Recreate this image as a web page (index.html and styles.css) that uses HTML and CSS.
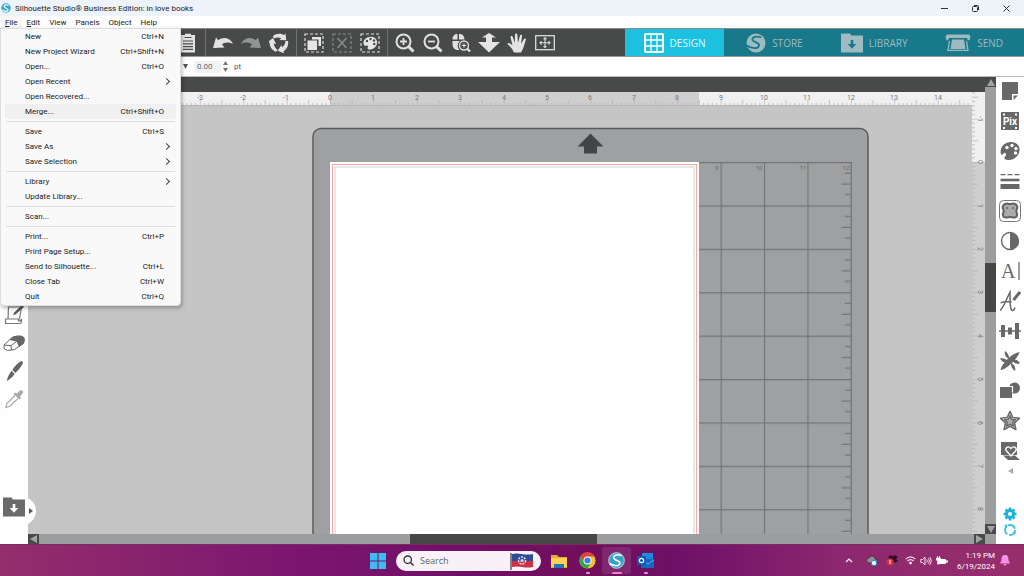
FILE: index.html
```html
<!DOCTYPE html>
<html lang="en">
<head>
<meta charset="utf-8">
<title>Silhouette Studio</title>
<link rel="stylesheet" href="styles.css">
</head>
<body>
<div class="app">
  <header class="titlebar">
    <svg class="logo" width="10" height="10" viewBox="0 0 20 20"><circle cx="10" cy="10" r="9.5" fill="#37a9cc"/><path d="M15 5C11 2 5 4 7 8s8 2 7 6-7 3-11 0" fill="none" stroke="#fff" stroke-width="2.4"/></svg>
    <span class="title">Silhouette Studio® Business Edition: in love books</span>
    <div class="window-buttons">
      <button aria-label="Minimize"><svg width="9" height="9"><path d="M1 4.500H8" stroke="#333"/></svg></button>
      <button aria-label="Restore"><svg width="9" height="9" fill="none" stroke="#333"><rect x="1.500" y="2.500" width="5" height="5" rx="1"/><path d="M3 1.500h3.500a1 1 0 0 1 1 1V6"/></svg></button>
      <button aria-label="Close"><svg width="9" height="9"><path d="M1.500 1.500l6 6M7.500 1.500l-6 6" stroke="#333"/></svg></button>
    </div>
  </header>

  <nav class="menubar">
    <button class="open"><u>F</u>ile</button>
    <button><u>E</u>dit</button>
    <button>View</button>
    <button>Panels</button>
    <button>Object</button>
    <button>Help</button>
    <div class="menu" role="menu">
      <button role="menuitem">New<span>Ctrl+N</span></button>
      <button role="menuitem">New Project Wizard<span>Ctrl+Shift+N</span></button>
      <button role="menuitem">Open...<span>Ctrl+O</span></button>
      <button role="menuitem" class="sub">Open Recent</button>
      <button role="menuitem">Open Recovered...</button>
      <button role="menuitem" class="hover">Merge...<span>Ctrl+Shift+O</span></button>
      <hr>
      <button role="menuitem">Save<span>Ctrl+S</span></button>
      <button role="menuitem" class="sub">Save As</button>
      <button role="menuitem" class="sub">Save Selection</button>
      <hr>
      <button role="menuitem" class="sub">Library</button>
      <button role="menuitem">Update Library...</button>
      <hr>
      <button role="menuitem">Scan...</button>
      <hr>
      <button role="menuitem">Print...<span>Ctrl+P</span></button>
      <button role="menuitem">Print Page Setup...</button>
      <button role="menuitem">Send to Silhouette...<span>Ctrl+L</span></button>
      <button role="menuitem">Close Tab<span>Ctrl+W</span></button>
      <button role="menuitem">Quit<span>Ctrl+Q</span></button>
    </div>
  </nav>

  <div class="toolbar">
    <div class="tools">
      <button aria-label="Paste"><svg width="20" height="20" viewBox="0 0 20 20"><path d="M3 2h4V.8h6V2h4v17.500H3z" fill="#e2e2e2"/><path d="M6.500 4.500h7M5 8h10M5 10.800h10M5 13.600h10M5 16.400h10" stroke="#484a49" stroke-width="1.200"/></svg></button>
      <i class="divider"></i>
      <button aria-label="Undo"><svg width="20" height="20" viewBox="0 0 20 20"><path d="M0 15L3 4.500l2.300 2.700C10 3.500 17 4.500 20 11 15 8.800 11.500 9.300 9 11.500L11.500 14.500z" fill="#e2e2e2"/></svg></button>
      <button aria-label="Redo"><svg width="20" height="20" viewBox="0 0 20 20"><path d="M20 15L17 4.500l-2.300 2.700C10 3.500 3 4.500 0 11 5 8.800 8.500 9.300 11 11.500L8.500 14.500z" fill="#929393"/></svg></button>
      <button aria-label="Refresh"><svg width="20" height="20" viewBox="0 0 20 20"><g fill="#e2e2e2"><path id="arc" d="M3.800 3.200C7.500 0 12 .2 14.800 2L16.500.5l.8 6.800-6.800-.3 1.800-1.800C9.500 4 7 4.200 5 5.500z"/><use href="#arc" transform="rotate(120 10 10)"/><use href="#arc" transform="rotate(240 10 10)"/></g></svg></button>
      <i class="divider"></i>
      <button aria-label="Select all"><svg width="20" height="20" viewBox="0 0 20 20"><rect x="1" y="1" width="18" height="18" fill="none" stroke="#ddd" stroke-width="1.200" stroke-dasharray="3 2"/><path d="M8 4h9v9h-2.500V6.500H8z" fill="#e6e6e6"/><rect x="3.500" y="7.500" width="9.500" height="9.500" fill="#e6e6e6"/></svg></button>
      <button aria-label="Deselect"><svg width="20" height="20" viewBox="0 0 20 20"><rect x="1" y="1" width="18" height="18" fill="none" stroke="#8a8b8b" stroke-width="1.200" stroke-dasharray="3 2"/><path d="M5.500 5l9 10M14.500 5l-9 10" stroke="#8a8b8b" stroke-width="1.500"/></svg></button>
      <button aria-label="Select by color"><svg width="20" height="20" viewBox="0 0 20 20"><rect x="1" y="1" width="18" height="18" fill="none" stroke="#ddd" stroke-width="1.200" stroke-dasharray="3 2"/><path d="M3.500 11C3 6.500 7 3.500 11 3.700c4 .2 6.500 3 6 6.500-.5 4-4 6.500-8 6.300-2-.1-1.500-2.500-.5-3.500-2-1-3.500 1-5-2z" fill="#e6e6e6"/><g fill="#484a49"><circle cx="7" cy="8" r="1.200"/><circle cx="10.500" cy="6" r="1.200"/><circle cx="14" cy="7.500" r="1.200"/><circle cx="14.300" cy="11" r="1.200"/></g></svg></button>
      <i class="divider"></i>
      <button aria-label="Zoom in"><svg width="20" height="20" viewBox="0 0 20 20" fill="none" stroke="#e0e0e0"><circle cx="8.500" cy="8.500" r="7" stroke-width="2"/><path d="M13.500 13.500l5 5" stroke-width="3"/><path d="M5 8.500h7M8.500 5v7" stroke-width="1.800"/></svg></button>
      <button aria-label="Zoom out"><svg width="20" height="20" viewBox="0 0 20 20" fill="none" stroke="#e0e0e0"><circle cx="8.500" cy="8.500" r="7" stroke-width="2"/><path d="M13.500 13.500l5 5" stroke-width="3"/><path d="M5 8.500h7" stroke-width="1.800"/></svg></button>
      <button aria-label="Zoom selection"><svg width="20" height="20" viewBox="0 0 20 20"><path d="M6.500 1v5.500H1.500C1.500 3 3.500 1 6.500 1zM8 1c3.500 0 5.500 2 5.500 5.500H8zM1.500 8H9c-3 2.500-3 6-.5 9-4.500.5-7-2-7-6z" fill="#e0e0e0"/><g fill="none" stroke="#e0e0e0"><circle cx="13" cy="12.500" r="4.500" stroke-width="1.400"/><path d="M16 15.500l3 3" stroke-width="2.400"/><path d="M10.800 12.500h4.400M13 10.300v4.400"/></g></svg></button>
      <button aria-label="Drag zoom"><svg width="22" height="20" viewBox="0 0 22 20"><path d="M11 0l7 4.500h-4V9h8L11 19.500 0 9h8V4.500H4z" fill="#e4e4e4"/></svg></button>
      <button aria-label="Pan"><svg width="20" height="20" viewBox="0 0 20 20"><path d="M7 19.500c-1-3-4-6-6.500-8.500 0-1.500 2-1.300 5 1.500L3.500 4c0-1.500 2-1.500 2.300 0l2 6L8 1.500C8.200 0 10.200 0 10.300 1.500L11 10l2-7.500c.5-1.300 2.300-1 2 .5L14 11l3-5c.8-1.200 2.400-.3 1.800 1-1 3-2.300 9-4.800 12.500z" fill="#e4e4e4"/></svg></button>
      <button aria-label="Fit to page"><svg width="20" height="20" viewBox="0 0 20 20" fill="none" stroke="#dcdcdc"><rect x=".7" y="2.700" width="18.600" height="14" stroke-width="1.300"/><path d="M5 9.700h10M10 5v9.500M6.500 8L5 9.700l1.500 1.700M13.500 8L15 9.700l-1.500 1.700M8.500 6.200L10 4.800l1.500 1.400M8.500 13.200l1.500 1.400 1.500-1.400" stroke-width="1.100"/></svg></button>
    </div>
    <div class="tabs">
      <button class="tab active"><svg width="20" height="20" viewBox="0 0 20 20"><rect x="1" y="1" width="18" height="18" rx="1" fill="none" stroke="#fff" stroke-width="2"/><path d="M7 1v18M13 1v18M1 7h18M1 13h18" stroke="#fff" stroke-width="1.300"/></svg>DESIGN</button>
      <button class="tab"><svg width="20" height="20" viewBox="0 0 20 20"><circle cx="10" cy="10" r="9.500" fill="#9fbac0"/><path d="M15.500 4.500C11 2.500 5.500 4 6.500 7c1 2.500 7 2 6.500 5.500C12.500 16 6 16 .5 12.500" fill="none" stroke="#17798a" stroke-width="1.800"/></svg>STORE</button>
      <button class="tab"><svg width="22" height="20" viewBox="0 0 22 20"><path d="M0 .5h9l1.500 2H22V19.500H0z" fill="#9fbac0"/><path d="M9.700 7h2.600v4h3L11 15.800 6.700 11h3z" fill="#17798a"/></svg>LIBRARY</button>
      <button class="tab"><svg width="26" height="20" viewBox="0 0 26 20"><path d="M2.500 1.500h21c2.500 0 2.500 6-.5 6l-1-2.500H4L3 7.500c-3 0-3-6-.5-6z" fill="#9fbac0"/><path d="M7 6.500h12l1.500 9.500h-15z" fill="#9fbac0"/><path d="M4.500 8L3 17.300h20L21.500 8" fill="none" stroke="#9fbac0" stroke-width="1.300"/></svg>SEND</button>
    </div>
  </div>

  <div class="properties">
    <button aria-label="Line style" class="drop"><svg width="5" height="5"><path d="M0 0h5L2.500 5z" fill="#555"/></svg></button>
    <input id="thickness" type="text" value="0.00" aria-label="Line thickness">
    <div class="spinner">
      <button aria-label="Increase"><svg width="5" height="4"><path d="M0 4h5L2.500 0z" fill="#777"/></svg></button>
      <button aria-label="Decrease"><svg width="5" height="4"><path d="M0 0h5L2.500 4z" fill="#777"/></svg></button>
    </div>
    <label for="thickness">pt</label>
  </div>

  <main class="workspace">
    <aside class="left-tools">
      <button aria-label="Sketch pen"><svg width="20" height="20" viewBox="0 0 20 20"><path d="M4.500 2h13l-2 12H4zM1.500 14h13v2c2 0 3-1 3-2v3c0 1-1 1.500-2 1.500H1.500z" fill="#fff" stroke="#777" stroke-width="1.200"/><path d="M18 0l2 2-8 7-3 1.500 1.200-3z" fill="#555"/></svg></button>
      <button aria-label="Eraser"><svg width="22" height="20" viewBox="0 0 22 20"><path d="M1 12L9 4.500 14.500 3 20 4l1.500 3-1 3.500-9 6-7 1L1 15.500z" fill="#fff" stroke="#666"/><path d="M6.500 7L11 3l7-.5 3.500 2-.5 5.500-5 4-2.500-5.500z" fill="#666"/><path d="M1 12l7 .7 5.500-4.200M8 12.700l.5 4.500" fill="none" stroke="#666"/></svg></button>
      <button aria-label="Knife"><svg width="20" height="20" viewBox="0 0 20 20"><path d="M17.500 0C19 .3 19.500 1.500 18.500 3c-2 4-4.500 6.500-7 9L8.300 9C11 5 14 1.500 17.500 0zM7.600 9.800l3 3c-1.500 3-4.500 5.500-7.800 7.200C3.500 16.500 5 13 7.600 9.800z" fill="#666"/></svg></button>
      <button aria-label="Eyedropper"><svg width="20" height="20" viewBox="0 0 20 20"><path d="M11 6.500L3 14.300 1.800 18.500 6 17l8-7.500" fill="#fff" stroke="#aaa" stroke-width="1.200"/><path d="M9.500 5l1.500-1.500 2 1C15 1.500 17 .5 18.500 1.500c1.500 1.500.5 3.500-2.500 5.500l1 2-1.500 1.500z" fill="#a9a9a9"/></svg></button>
      <button class="library-button" aria-label="Library"><svg width="22" height="20" viewBox="0 0 22 20"><path d="M0 .5h8.500l1.500 2h12V19.500H0z" fill="#696a6a"/><path d="M9.700 7h2.600v4h3L11 15.800 6.700 11h3z" fill="#fff"/></svg></button>
      <button class="flyout" aria-label="Expand library"><svg width="4" height="6"><path d="M0 0v6l4-3z" fill="#555"/></svg></button>
    </aside>

    <section class="document">
      <div class="doc-tabs"></div>
      <svg class="ruler-x" aria-label="Horizontal ruler">
        <defs><pattern id="tx" x="302" width="43.400" height="14" patternUnits="userSpaceOnUse"><path d="M.3 7v7M4.600 11v3M9 11v3M13.300 11v3M17.600 11v3M22 8v6M26.300 11v3M30.600 11v3M35 11v3M39.300 11v3" stroke="#b0b0b0" stroke-width=".8"/></pattern></defs>
        <rect width="100%" height="14" fill="#f0f0f0"/><rect x="302" width="369" height="14" fill="#cecece"/><rect width="100%" height="14" fill="url(#tx)"/>
        <g class="ticks"><text x="172" y="8">-3</text><text x="215" y="8">-2</text><text x="258" y="8">-1</text><text x="302" y="8">0</text><text x="345" y="8">1</text><text x="389" y="8">2</text><text x="432" y="8">3</text><text x="476" y="8">4</text><text x="519" y="8">5</text><text x="562" y="8">6</text><text x="606" y="8">7</text><text x="649" y="8">8</text><text x="693" y="8">9</text><text x="736" y="8">10</text><text x="779" y="8">11</text><text x="823" y="8">12</text><text x="866" y="8">13</text><text x="910" y="8">14</text></g>
      </svg>
      <svg class="ruler-y" aria-label="Vertical ruler">
        <defs><pattern id="ty" y="70" width="13" height="43.400" patternUnits="userSpaceOnUse"><path d="M0 .3h6M0 4.600h3M0 9h3M0 13.300h3M0 17.600h3M0 22h6M0 26.300h3M0 30.600h3M0 35h3M0 39.300h3" stroke="#b0b0b0" stroke-width=".8"/></pattern></defs>
        <rect width="13" height="100%" fill="#cecece"/><rect width="13" height="70" fill="#f0f0f0"/><rect width="13" height="100%" fill="url(#ty)"/>
        <g class="ticks"><text transform="translate(6 27) rotate(90)">-1</text><text transform="translate(6 70) rotate(90)">0</text><text transform="translate(6 114) rotate(90)">1</text><text transform="translate(6 157) rotate(90)">2</text><text transform="translate(6 200) rotate(90)">3</text><text transform="translate(6 244) rotate(90)">4</text><text transform="translate(6 287) rotate(90)">5</text><text transform="translate(6 331) rotate(90)">6</text><text transform="translate(6 374) rotate(90)">7</text><text transform="translate(6 417) rotate(90)">8</text></g>
      </svg>
      <svg class="canvas" aria-label="Cutting mat">
        <defs>
          <pattern id="grid" width="43.400" height="43.400" patternUnits="userSpaceOnUse"><path d="M0 .5h43.400M.5 0v43.400" stroke="#727476" stroke-width="1.300"/></pattern>
          <pattern id="marks" x="510.800" width="10" height="43.400" patternUnits="userSpaceOnUse"><path d="M4 11h6M1 22h9M4 32.600h6" stroke="#66686a"/></pattern>
        </defs>
        <g transform="translate(302 56)">
          <rect x="-17" y="-33.500" width="555" height="640" rx="8" fill="#9fa0a2" stroke="#595b5c" stroke-width="1.500"/>
          <path d="M260.500-28.500l13 13h-6.500v7h-13v-7h-6.500z" fill="#434445"/>
          <rect width="521.500" height="521" fill="url(#grid)"/>
          <path d="M521.300 0v521" stroke="#727476"/>
          <rect x="510.800" width="10" height="521" fill="url(#marks)"/>
          <g class="mat-labels"><text x="387" y="8">9</text><text x="429" y="8">10</text><text x="473" y="8">11</text><text x="516" y="8">12</text></g>
          <rect width="369" height="477" fill="#fff"/>
          <rect x="2.500" y="2.500" width="364" height="472" fill="none" stroke="#f7a9aa"/>
          <rect x="5" y="5" width="359" height="467" fill="none" stroke="#dcdcde" stroke-width="1.300"/>
        </g>
      </svg>
      <div class="scroll-y">
        <button class="dark" aria-label="Scroll up"><svg width="8" height="7"><path d="M0 7h8L4 0z" fill="#a2a3a4"/></svg></button>
        <div class="track-y"><i class="thumb"></i></div>
        <button class="dark" aria-label="Scroll down"><svg width="8" height="7"><path d="M0 0h8L4 7z" fill="#a2a3a4"/></svg></button>
      </div>
      <div class="scroll-x">
        <button class="dark" aria-label="Scroll left"><svg width="7" height="8"><path d="M7 0v8L0 4z" fill="#a2a3a4"/></svg></button>
        <div class="track-x"><i class="thumb"></i></div>
        <button class="dark" aria-label="Scroll right"><svg width="7" height="8"><path d="M0 0v8l7-4z" fill="#a2a3a4"/></svg></button>
      </div>
      <div class="corner"></div>
    </section>

    <aside class="panels">
      <button aria-label="Page setup"><svg width="20" height="20" viewBox="0 0 20 20"><path d="M2 1h16v12h-6v6H2z" fill="#666869"/><path d="M13.500 14.500H18L13.500 19z" fill="#666869"/></svg></button>
      <button aria-label="PixScan"><svg width="20" height="20" viewBox="0 0 20 20"><rect x="1" y="1" width="18" height="18" fill="#666869"/><path d="M3 2.500h2v2H3zM15 2.500h2v2h-2zM3 16h2v2H3zM15 16h2v2h-2z" fill="#fff"/><text class="pix" x="10" y="14">Pix</text></svg></button>
      <button aria-label="Fill"><svg width="20" height="20" viewBox="0 0 20 20"><path d="M.7 12C0 6 4.500 1 11 1c5.500 0 9 3.500 8.500 8.500C19 15 14 19 8.500 19c-4.500 0-5-2-3-4 1.500-1.500-.5-4-1.500-3-1 1.500-3 3-3.300 0z" fill="#666869"/><g fill="#fff"><circle cx="7" cy="6.500" r="1.700"/><circle cx="12" cy="4.500" r="1.700"/><circle cx="16" cy="7.500" r="1.700"/><circle cx="15.500" cy="12" r="1.700"/></g></svg></button>
      <button aria-label="Line style"><svg width="20" height="20" viewBox="0 0 20 20" stroke="#666869"><path d="M.5 3.700h5M7.500 3.700h5M14.500 3.700h5" stroke-width="1.200"/><path d="M.5 9h19" stroke-width="2.600"/><path d="M.5 15.500h19" stroke-width="5"/></svg></button>
      <button aria-label="Trace"><svg width="24" height="24" viewBox="0 0 24 24"><rect x="1.500" y="1.500" width="21" height="21" rx="4" fill="#fff" stroke="#777"/><path d="M7 5c2-1 3 0 5 0s3-1 5 0 3 3 1.800 5c-.6 1.300-.6 2.700 0 4 1 3-1 5-3.300 4.500-2-.6-5-.6-7 0C6 19 4 17 5.200 14c.6-1.300.6-2.700 0-4C4 8 5 6 7 5z" fill="#a9aaab" stroke="#5f6162" stroke-width="2"/><circle cx="9" cy="9" r="1" fill="#666"/><circle cx="15" cy="9" r="1" fill="#666"/></svg></button>
      <button aria-label="Image effects"><svg width="20" height="20" viewBox="0 0 20 20"><circle cx="10" cy="10" r="8.500" fill="#fff" stroke="#666869" stroke-width="1.400"/><path d="M10 1.500a8.500 8.500 0 0 1 0 17z" fill="#666869"/></svg></button>
      <button aria-label="Text style"><svg width="22" height="26" viewBox="0 0 22 26"><text class="serif-a" x="2" y="20">A</text><path d="M20 4v18" stroke="#777" stroke-width="1.400"/></svg></button>
      <button aria-label="Sketch"><svg width="22" height="22" viewBox="0 0 22 22" fill="none" stroke="#666869"><path d="M1 20.500C4 19 8 8 11 2c.3 7-.5 15 1.500 18 1.500 1.500 3-1 3.500-2.500M1.500 13c3-2 7-1.500 11-1" stroke-width="1.500"/><path d="M21 2l-6.500 8" stroke-width="3"/></svg></button>
      <button aria-label="Align"><svg width="22" height="20" viewBox="0 0 22 20" fill="#666869"><path d="M2 4h4v12H2zM9 6.500h4v7H9zM16 2h4v16h-4zM0 9.300h22v1.400H0z"/></svg></button>
      <button aria-label="Replicate"><svg width="20" height="20" viewBox="0 0 20 20" fill="#666869"><path d="M19.500 1C18.500 6 8 18 .5 19 1.500 13 12 2 19.500 1zM5 0c3 2 4.200 4.500 4 8C5.500 6.500 4 3.500 5 0zM0 7.500c3.500-.8 6 .3 7.500 3C4.500 12.200 1.800 11 0 7.500zM20 12.500c-3.500.8-6-.3-7.500-3 3-1.700 5.700-.5 7.500 3zM15 20c-3-2-4.200-4.500-4-8 3.500 1.500 5 4.500 4 8z"/></svg></button>
      <button aria-label="Modify"><svg width="20" height="20" viewBox="0 0 20 20"><circle cx="14.500" cy="7" r="5.500" fill="#666869"/><path d="M0 6h12v11H0z" fill="#666869"/><path d="M8 5.500h4.500v6" fill="none" stroke="#fff" stroke-width="1.200"/></svg></button>
      <button aria-label="Offset"><svg width="22" height="22" viewBox="0 0 22 22" stroke-linejoin="round"><path d="M11 1.500l2.800 6 6.500.8-4.800 4.500 1.300 6.700L11 16.300l-5.800 3.200 1.300-6.700L1.700 8.300l6.500-.8z" fill="#fff" stroke="#666869" stroke-width="1.600"/><path d="M11 5.500l1.700 3.700 3.800.5-2.800 2.600.8 3.900L11 14.300l-3.500 1.900.8-3.900-2.800-2.600 3.800-.5z" fill="#aaa" stroke="#666869" stroke-width="1.500"/></svg></button>
      <button aria-label="Library designs"><svg width="20" height="20" viewBox="0 0 20 20"><path d="M1 1h16v13H1z" fill="#666869"/><path d="M3 14.500h12l5 4.500H8z" fill="#666869"/><path d="M11 15L6 9.500C5 6 8.500 4.500 11 7.500c2.500-3 6-1.500 5 2z" fill="#666869" stroke="#fff" stroke-width="1.400"/></svg></button>
      <button class="collapse" aria-label="Collapse"><svg width="5" height="6"><path d="M5 0v6L0 3z" fill="#aaa"/></svg></button>
      <button class="settings" aria-label="Preferences"><svg width="14" height="14" viewBox="-7 -7 14 14"><circle r="3.600" fill="none" stroke="#19b3d4" stroke-width="3"/><path d="M-6.500 0H-4M4 0h2.500M0-6.500V-4M0 4v2.500M-4.500-4.500L-3-3M3 3l1.500 1.500M4.500-4.500L3-3M-3 3l-1.500 1.500" stroke="#19b3d4" stroke-width="2.500"/></svg></button>
      <button class="sync" aria-label="Themes"><svg width="14" height="14" viewBox="-7 -7 14 14"><circle r="5" fill="none" stroke="#3cc0dc" stroke-width="1.800" stroke-dasharray="8.400 2"/><path d="M-6-4l3-2v4zM6 2l-1 3-2-3z" fill="#3cc0dc"/></svg></button>
    </aside>
  </main>

  <footer class="taskbar">
    <div class="apps">
      <button class="start" aria-label="Start"><svg width="16" height="16"><path d="M0 0h7.500v7.500H0zM8.500 0H16v7.500H8.500zM0 8.500h7.500V16H0zM8.500 8.500H16V16H8.500z" fill="#3cbcf0"/></svg></button>
      <div class="search">
        <svg width="11" height="11" viewBox="0 0 11 11" fill="none" stroke="#333"><circle cx="4.700" cy="4.700" r="3.700" stroke-width="1.300"/><path d="M7.500 7.500l3 3" stroke-width="1.400"/></svg>
        <input type="search" placeholder="Search" aria-label="Search">
        <svg width="24" height="18" viewBox="0 0 24 18"><path d="M2 2c7-2 12 2 21 0v7H2z" fill="#2f4c96"/><path d="M2 9h21v6c-8 2-13-2-21 0z" fill="#cf2f44"/><path d="M1 1v17" stroke="#444" stroke-width="1.300"/><circle cx="12" cy="8.500" r="3.500" fill="none" stroke="#e9e4ee" stroke-width="1.500" stroke-dasharray="2 1"/><circle cx="12" cy="8.500" r="1.600" fill="#cfd4e8"/></svg>
      </div>
      <button class="task" aria-label="File Explorer"><svg width="18" height="16"><path d="M1 2h6l2 2h8v11H1z" fill="#e8a92c"/><path d="M1 5h16v9H1z" fill="#fbd253"/><path d="M4 11h10v4H4z" fill="#2373be"/></svg></button>
      <button class="task running" aria-label="Chrome"><svg width="17" height="17" viewBox="-10 -10 20 20"><circle r="9.500" fill="#f2c035"/><path d="M-8.300-4.700A9.500 9.500 0 0 1 8.300-4.700H0L-4 2.500z" fill="#dd4538"/><path d="M-8.300-4.700L-4 2.500 4 2.500 0 9.500A9.500 9.500 0 0 1-8.300-4.700z" fill="#35a352"/><circle r="4.700" fill="#fff"/><circle r="3.600" fill="#3b7de0"/></svg></button>
      <button class="task running current" aria-label="Silhouette Studio"><svg width="17" height="17" viewBox="0 0 20 20"><circle cx="10" cy="10" r="9.200" fill="#37a3c4" stroke="#cfe6ee"/><path d="M16 4.500C11 2 5 4 7 7.500s8 2.500 7 6-7 3.500-12 0" fill="none" stroke="#fff" stroke-width="1.800"/></svg></button>
      <button class="task running" aria-label="Outlook"><svg width="17" height="17"><path d="M5 1h11v7H5z" fill="#1f8be0"/><path d="M5 7h12v9H4z" fill="#1767bf"/><path d="M5 8l6 4 6-4" fill="none" stroke="#49b0ee"/><rect y="4" width="9" height="9" rx="1" fill="#0f5cb3"/><circle cx="4.500" cy="8.500" r="2.200" fill="none" stroke="#fff" stroke-width="1.200"/></svg></button>
    </div>
    <div class="tray">
      <button aria-label="Hidden icons" class="chevron"><svg width="8" height="5"><path d="M1 4l3-3 3 3" fill="none" stroke="#fff" stroke-width="1.200"/></svg></button>
      <button aria-label="OneDrive" class="wide"><svg width="12" height="11"><path d="M1 7c-1-3 1-4 2-4 2-3 6-2 6 1 3 0 3 4 0 4H3z" fill="#8d9296" stroke="#333" stroke-width=".8"/><circle cx="8" cy="8" r="2.700" fill="#e8f4fa" stroke="#2b8ac2"/></svg></button>
      <button aria-label="Dropbox" class="wide"><svg width="12" height="11"><path d="M2 2l3-2 2 1.500L9 0l3 2-2 2 2 2-3 2-2-1.500L5 8 2 6l2-2z" fill="#2d1030"/><circle cx="4" cy="7" r="3.500" fill="#dc2e3c"/><path d="M4 5v4" stroke="#fff"/></svg></button>
      <button aria-label="Wi-Fi"><svg width="11" height="9" fill="none" stroke="#f3dfea"><path d="M.7 3.200c3-3 6.600-3 9.600 0M2.500 5c2-1.800 4-1.800 6 0" stroke-width="1.200"/><circle cx="5.500" cy="7" r="1" fill="#fff"/></svg></button>
      <button aria-label="Volume"><svg width="12" height="10" fill="none" stroke="#f3dfea"><path d="M.8 3.500h1.700L5 1.200v7.600L2.500 6.500H.8zM6.700 3.500c.8 1 .8 2 0 3M8.200 2.200c1.500 2 1.500 3.600 0 5.600M9.700 1c2 2.500 2 5.500 0 8"/></svg></button>
      <button aria-label="Battery"><svg width="12" height="10"><rect x="2" y="3" width="8" height="5" rx="1" fill="#fff"/><path d="M10 4.500h2v2h-2z" fill="#fff"/><path d="M1.500 0v2M3.500 0v2M.5 2h4v2l-1 1v3h-2V5l-1-1z" fill="#fff" stroke="#fff" stroke-width=".8"/></svg></button>
      <div class="clock"><span>1:19 PM</span><span>6/19/2024</span></div>
      <button aria-label="Notifications"><svg width="10" height="11"><path d="M5 0c3 0 3.500 2 3.500 5L10 8.500H0L1.500 5C1.500 2 2 0 5 0zM3.500 9h3a1.500 1.500 0 0 1-3 0z" fill="#f88fe4"/></svg></button>
    </div>
  </footer>
</div>
</body>
</html>
```
FILE: styles.css
```css
* { box-sizing: border-box; }

body {
  margin: 0;
  font-family: Roboto, "Open Sans", sans-serif;
  font-size: 8px;
  color: #222;
  background: #fff;
}

button, input {
  margin: 0;
  padding: 0;
  border: 0;
  background: none;
  font: inherit;
  color: inherit;
}

button { display: flex; align-items: center; justify-content: center; }
svg { display: block; flex: none; }

.app { display: flex; flex-direction: column; height: 100vh; overflow: hidden; }

/* Title and menu bars */
.titlebar { display: flex; align-items: center; flex: none; height: 16px; padding-left: 1px; gap: 4px; background: #edf3f8; }
.window-buttons { display: flex; margin-left: auto; padding-right: 2px; }
.window-buttons button { width: 31px; height: 16px; }

.menubar { position: relative; z-index: 2; display: flex; flex: none; gap: 1px; height: 12px; padding-left: 1px; background: #fff; }
.menubar > button { padding: 0 4px; }
.menubar > .open { background: #f6f6f6; }

.menu {
  position: absolute;
  left: 0;
  top: 100%;
  width: 181px;
  padding: 0 4px 1px;
  border: 1px solid #ddd;
  border-radius: 0 0 4px 4px;
  background: #f9f9f9;
  box-shadow: 1px 2px 4px rgba(0, 0, 0, .3);
}
.menu button { width: 100%; height: 15px; padding: 0 12px 0 20px; justify-content: flex-start; border-radius: 3px; }
.menu button span { margin-left: auto; }
.menu .hover { background: #f0f0f0; }
.menu .sub::after {
  content: "";
  width: 4px;
  height: 4px;
  margin: 0 -5px 0 auto;
  border: solid #444;
  border-width: 1px 1px 0 0;
  transform: rotate(45deg);
}
.menu hr { height: 1px; margin: 2px 1px; border: 0; background: #dedede; }

/* Main toolbar */
.toolbar { display: flex; flex: none; justify-content: space-between; height: 29px; border-top: 1px solid #8c8c8c; border-bottom: 1px solid #9a9a9a; background: #484a49; }
.tools { display: flex; padding-left: 174px; }
.tools button { width: 28px; }
.divider { width: 1px; margin: 0 3px; background: #717272; }
.tabs { display: grid; grid-template-columns: repeat(4, 1fr); width: 39%; background: #17798a; }
.tab { gap: 6px; font-family: "Open Sans", sans-serif; font-size: 10px; color: #9fbac0; }
.tab.active { background: #1cc1df; color: #e6fafd; }

.properties { display: flex; align-items: center; flex: none; height: 20px; padding-left: 183px; border-bottom: 1px solid #bbb; background: #fff; }
.properties input { width: 26px; height: 12px; margin: 0 2px 0 7px; padding-left: 2px; background: #f2f2f2; color: #666; }
.spinner { display: grid; gap: 3px; margin-right: 6px; }
.properties label { color: #555; }

/* Workspace */
.workspace { display: flex; flex: 1; min-height: 0; }
.left-tools { position: relative; z-index: 1; display: flex; flex: none; flex-direction: column; width: 28px; padding: 224px 0 23px; background: #fff; }
.left-tools button { height: 28px; }
.left-tools .library-button { position: relative; z-index: 1; margin-top: auto; }
.left-tools .flyout { position: absolute; left: 22px; bottom: 19px; width: 14px; padding-left: 3px; border-radius: 0 14px 14px 0; background: #fff; }

.document { display: grid; flex: 1; min-width: 0; grid-template-columns: 1fr 13px 11px; grid-template-rows: 15px 14px 1fr 10px; background: #c5c5c5; }
.doc-tabs { grid-area: 1 / 1 / 2 / 3; background: #484a49; }
.ruler-x { grid-area: 2 / 1; width: 100%; height: 14px; border-bottom: 1px solid #b5b5b5; }
.ruler-y { grid-area: 2 / 2 / 4 / 3; width: 13px; height: 100%; }
.canvas { grid-area: 3 / 1; width: 100%; height: 100%; overflow: hidden; }
.ticks { font-size: 7px; fill: #777; text-anchor: middle; }
.mat-labels { font-size: 6px; fill: #66686a; text-anchor: middle; }

.scroll-y { grid-area: 1 / 3 / 4 / 4; display: flex; flex-direction: column; }
.scroll-x { grid-area: 4 / 1 / 5 / 3; display: flex; }
.corner { grid-area: 4 / 3; background: #9c9d9f; }
.dark { flex: none; width: 11px; height: 10px; background: #484a49; }
.track-y, .track-x { display: grid; flex: 1; background: #9c9d9f; }
.track-y { grid-template-rows: 176fr 48fr 212fr; }
.track-x { grid-template-columns: 372fr 187fr 378fr; }
.thumb { background: #474747; }
.track-y .thumb { grid-row: 2; }
.track-x .thumb { grid-column: 2; }

.panels { display: flex; flex: none; flex-direction: column; gap: 2px; width: 28px; padding-bottom: 7px; background: #fff; }
.panels button { flex: none; height: 28px; }
.panels .collapse { height: 8px; }
.panels .settings { height: 14px; margin-top: auto; }
.panels .sync { height: 14px; }
.pix { font-size: 10px; font-weight: 700; fill: #fff; text-anchor: middle; }
.serif-a { font-family: "Liberation Serif", serif; font-size: 20px; fill: #666869; }

/* Taskbar */
.taskbar {
  display: grid;
  grid-template-columns: 1fr auto 1fr;
  flex: none;
  height: 32px;
  border-top: 1px solid #7c2a60;
  background: linear-gradient(90deg, #932f6c, #7c1670 28%, #6f1067 45%, #720f5c 58%, #6f1068 66%, #8c2870 82%, #962f6b);
}
.apps { display: flex; grid-column: 2; align-items: center; }
.start { width: 28px; height: 28px; margin-right: 4px; }
.search { display: flex; align-items: center; gap: 6px; width: 145px; height: 20px; margin-right: 3px; padding: 0 7px; border-radius: 10px; background: #f8f1f7; }
.search input { flex: 1; min-width: 0; font-family: "Open Sans", sans-serif; font-size: 9px; }
.search input::placeholder { color: #666; opacity: 1; }
.task { position: relative; width: 29px; height: 27px; border-radius: 3px; }
.current { background: rgba(255, 255, 255, .1); }
.running::after { content: ""; position: absolute; bottom: 0; width: 4px; height: 2px; border-radius: 1px; background: #c9a3c4; }
.current::after { width: 10px; background: #e884c4; }

.tray { display: flex; grid-column: 3; align-items: center; justify-content: flex-end; padding-right: 11px; color: #fff; }
.tray button { width: 16px; }
.tray .wide { width: 20px; }
.tray .chevron { width: 26px; }
.clock { display: grid; width: 45px; margin-right: 2px; line-height: 11px; text-align: right; }
```
